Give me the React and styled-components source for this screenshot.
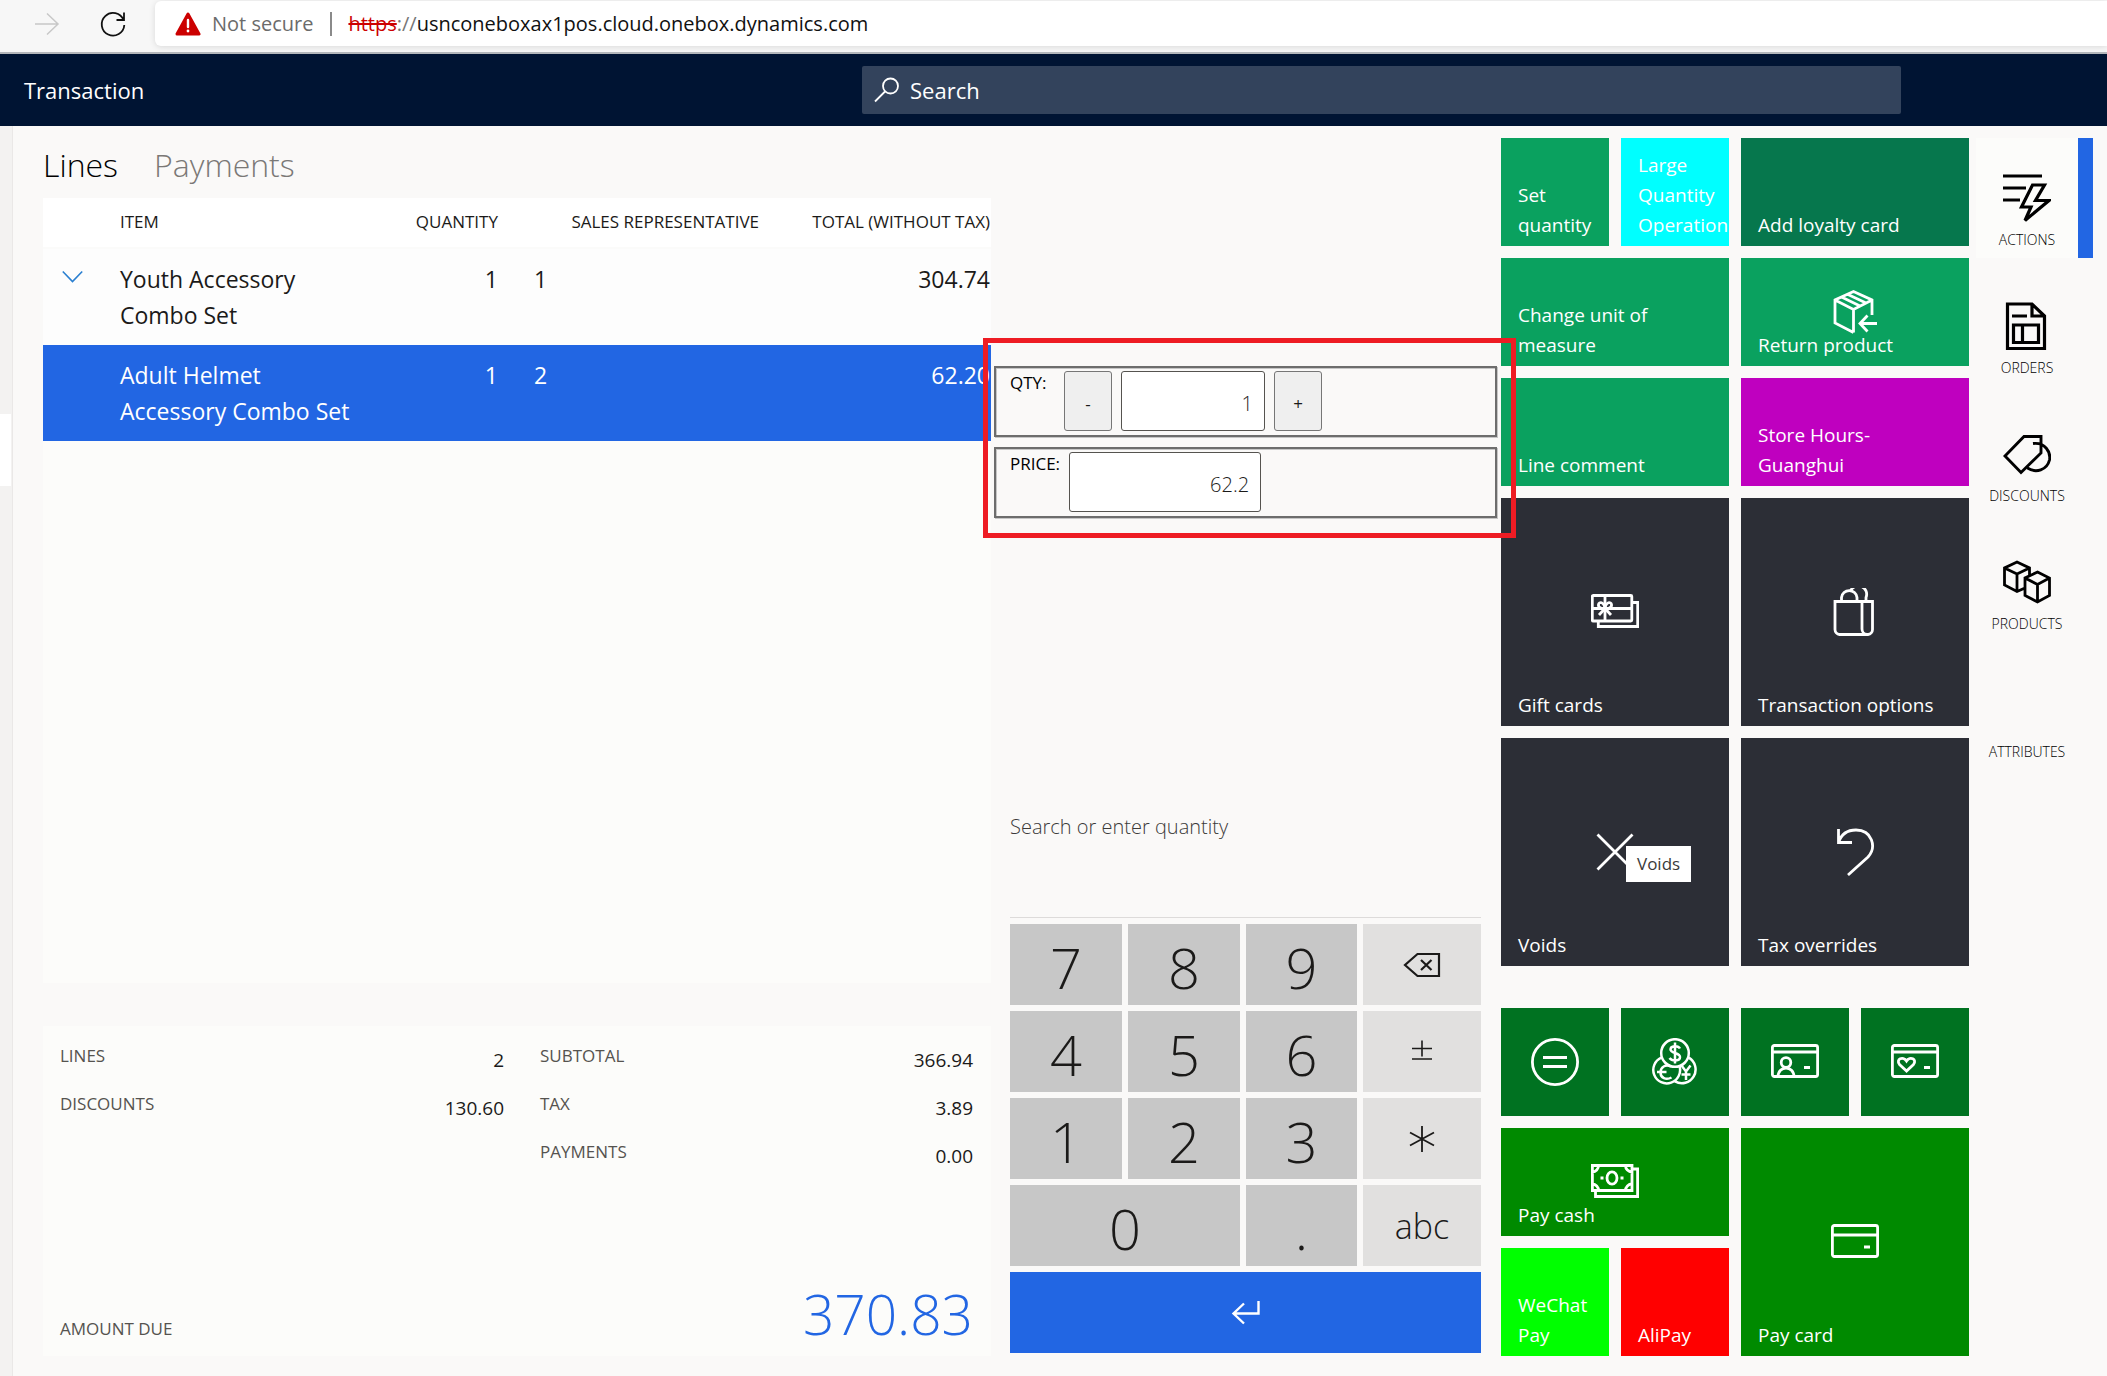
import React from "react";
import styled, { createGlobalStyle } from "styled-components";

const GlobalStyle = createGlobalStyle`
  *, *::before, *::after { box-sizing: border-box; }
  body {
    margin: 0;
    background: #faf9f8;
    color: #1b1a19;
    font-family: "Open Sans", "Noto Sans", sans-serif;
    font-size: 20px;
  }
  button, input { font: inherit; color: inherit; }
  button { cursor: pointer; }
`;

const Page = styled.div`
  display: flex;
  flex-direction: column;
  min-height: 100vh;
`;

/* Browser bar */

const BrowserBar = styled.div`
  display: flex;
  align-items: flex-start;
  height: 54px;
  padding: 1px 0 0 32px;
  background: #f7f7f7;
  border-bottom: 2px solid #b4b7bb;
`;

const BrowserButton = styled.button`
  display: flex;
  width: 30px;
  height: 45px;
  margin-right: 36px;
  padding: 0;
  align-items: center;
  border: 0;
  background: none;
  color: ${(p) => (p.$muted ? "#c8c8c8" : "#111")};
`;

const Address = styled.div`
  display: flex;
  flex: 1;
  align-items: center;
  height: 45px;
  margin-left: -9px;
  padding-left: 20px;
  border-radius: 6px 0 0 6px;
  background: #fff;
  box-shadow: 0 1px 6px rgba(0, 0, 0, 0.12);
  white-space: nowrap;
`;

const Warning = styled.span`
  margin: 0 16px 0 11px;
  padding-right: 17px;
  border-right: 2px solid #8a8a8a;
  color: #6b6b6b;
  line-height: 24px;
`;

const Url = styled.span`
  color: #111;
  s { color: #c00; }
  i { color: #767676; font-style: normal; }
`;

/* App header */

const Header = styled.header`
  display: flex;
  align-items: center;
  justify-content: space-between;
  height: 72px;
  padding: 0 206px 0 24px;
  background: #001433;
  color: #fff;
`;

const Title = styled.h1`
  margin: 0;
  font-size: 22px;
  font-weight: 400;
`;

const SearchBox = styled.label`
  display: flex;
  align-items: center;
  gap: 10px;
  width: 1039px;
  height: 48px;
  padding-left: 12px;
  border-radius: 2px;
  background: #33435c;
`;

const SearchInput = styled.input`
  flex: 1;
  padding: 0;
  border: 0;
  outline: 0;
  background: none;
  font-size: 22px;
  &::placeholder { color: #fff; opacity: 1; }
`;

/* Body */

const Body = styled.div`
  display: flex;
  flex: 1;
`;

const Rail = styled.div`
  width: 13px;
  padding-top: 288px;
  border-right: 1px solid #eae8e7;
  background: #f3f2f1;
`;

const RailMark = styled.div`
  height: 72px;
  margin-right: 1px;
  background: #fff;
`;

const Workspace = styled.main`
  display: flex;
  flex: 1;
  min-width: 0;
  padding: 12px 14px 20px 30px;
`;

const Cart = styled.section`
  display: flex;
  flex: 1;
  flex-direction: column;
  min-width: 0;
`;

const Tabs = styled.div`
  display: flex;
  gap: 36px;
  height: 60px;
`;

const Tab = styled.button`
  padding: 0 0 8px;
  border: 0;
  background: none;
  font-size: 32px;
  font-weight: 300;
  color: ${(p) => (p.$active ? "#000" : "#7a7876")};
`;

const LinesPanel = styled.div`
  flex: 1;
  margin-bottom: 43px;
  background: #fcfcfa;
`;

const LinesTable = styled.table`
  width: 100%;
  table-layout: fixed;
  border-collapse: collapse;
`;

const HeadCell = styled.th`
  width: ${(p) => p.$width || "auto"};
  height: 50px;
  padding: 0 1px 2px 0;
  border-bottom: 2px solid #fbfbfa;
  background: #fff;
  font-size: 17px;
  font-weight: 400;
  text-align: ${(p) => p.$align || "left"};
  white-space: nowrap;
`;

const LineRow = styled.tr`
  background: ${(p) => (p.$selected ? "#2266e3" : "#fdfdfd")};
  color: ${(p) => (p.$selected ? "#fff" : "#1b1a19")};
`;

const Cell = styled.td`
  padding: 12px 1px 12px ${(p) => p.$indent || "0"};
  font-size: 23px;
  line-height: 36px;
  text-align: ${(p) => p.$align || "left"};
  vertical-align: top;
`;

const Expand = styled.button`
  display: flex;
  margin-left: 19px;
  padding: 6px 0;
  border: 0;
  background: none;
  color: #2a7fd0;
`;

const Summary = styled.section`
  display: flex;
  flex-direction: column;
  justify-content: space-between;
  height: 330px;
  padding: 6px 18px 6px 17px;
  background: #fcfcfa;
`;

const Totals = styled.div`
  display: grid;
  grid-template-columns: 444px 1fr;
  column-gap: 36px;
`;

const TotalRow = styled.div`
  display: flex;
  justify-content: space-between;
  height: 48px;
  line-height: 48px;
`;

const TotalLabel = styled.span`
  font-size: 17px;
  color: #55534f;
`;

const TotalValue = styled.span`
  padding-top: 4px;
  font-size: 19px;
`;

const AmountDue = styled.div`
  display: flex;
  align-items: baseline;
  justify-content: space-between;
`;

const Amount = styled.strong`
  font-size: 55px;
  font-weight: 300;
  line-height: 72px;
  color: #2266e3;
`;

/* Entry column */

const Entry = styled.section`
  display: flex;
  flex-direction: column;
  justify-content: space-between;
  width: 510px;
  padding: 228px 4px 3px 3px;
`;

const LineEditor = styled.div`
  position: relative;
  display: grid;
  gap: 10px;
`;

const Highlight = styled.div`
  position: absolute;
  z-index: 2;
  inset: -28px -19px -20px -11px;
  border: 5px solid #ee1c24;
  pointer-events: none;
`;

const Field = styled.div`
  display: flex;
  gap: 9px;
  padding: 3px 14px 4px;
  border: 2px solid #6d6d6d;
  box-shadow: inset 1px 1px 0 #c6c6c6, 1px 1px 0 #c6c6c6;
`;

const FieldLabel = styled.label`
  min-width: 45px;
  font-size: 17px;
  line-height: 24px;
  color: #000;
`;

const FieldInput = styled.input`
  width: ${(p) => p.$width};
  height: 60px;
  padding: 4px 11px 0;
  border: 1px solid #55534f;
  border-radius: 3px;
  background: #fff;
  font-size: 20px;
  font-weight: 300;
  text-align: right;
`;

const StepButton = styled.button`
  width: 48px;
  height: 60px;
  padding: 4px 0 0;
  border: 1px solid #767676;
  border-radius: 3px;
  background: #efefef;
  font-size: 17px;
`;

const Keypad = styled.div`
  display: grid;
  grid-template-columns: 112px 112px 1fr 118px;
  gap: 6px;
  margin: 0 16px;
`;

const QuantityInput = styled.input`
  grid-column: 1 / -1;
  width: 100%;
  height: 108px;
  padding: 0 0 75px;
  border: 0;
  border-bottom: 1px solid #dddbda;
  outline: 0;
  background: none;
  font-size: 20px;
  font-weight: 300;
  &::placeholder { color: #3b3a39; opacity: 1; }
`;

const Key = styled.button`
  display: flex;
  grid-column: span ${(p) => p.$span || 1};
  align-items: center;
  justify-content: center;
  height: 81px;
  padding: 5px 0 0;
  border: 0;
  background: #c7c7c7;
  font-size: 56px;
  font-weight: 300;
  line-height: 60px;
`;

const SideKey = styled(Key)`
  padding: 0;
  background: #e1e0df;
  font-size: 34px;
`;

const EnterKey = styled(Key)`
  padding: 0;
  background: #2266e3;
  color: #fff;
`;

/* Button grids */

const Tiles = styled.div`
  display: flex;
  flex-direction: column;
  justify-content: space-between;
  width: 468px;
`;

const TileGrid = styled.div`
  display: grid;
  grid-template-columns: repeat(4, 1fr);
  grid-auto-rows: 108px;
  gap: 12px;
`;

const Tile = styled.button`
  position: relative;
  display: grid;
  grid-template-columns: 100%;
  grid-column: span ${(p) => p.$w || 1};
  grid-row: span ${(p) => p.$h || 1};
  min-width: 0;
  padding: 0;
  border: 0;
  background: ${(p) => p.$color};
  color: #fff;
  text-align: left;
`;

const TileIcon = styled.span`
  display: flex;
  grid-area: 1 / 1;
  place-self: center;
`;

const TileLabel = styled.span`
  grid-area: 1 / 1;
  align-self: end;
  padding: 0 24px 6px 17px;
  font-size: 19px;
  line-height: 30px;
`;

const Tooltip = styled.span`
  position: absolute;
  top: 108px;
  left: 125px;
  padding: 0 11px;
  background: #fff;
  color: #3b3a39;
  font-size: 17px;
  line-height: 36px;
`;

const Nav = styled.nav`
  display: flex;
  flex-direction: column;
  gap: 8px;
  width: 117px;
  margin-left: 7px;
`;

const NavItem = styled.button`
  display: flex;
  flex-direction: column;
  align-items: center;
  gap: 6px;
  height: 120px;
  padding: 36px 0 0;
  border: 0;
  border-right: 15px solid ${(p) => (p.$active ? "#2266e3" : "transparent")};
  background: ${(p) => (p.$active ? "#fcfcfa" : "none")};
  font-size: 14px;
  font-weight: 300;
  line-height: 24px;
  color: #000;
`;

const IconSlot = styled.span`
  display: flex;
  width: 48px;
  height: 48px;
`;

/* Icons */

function Icon({ children, size = 48, width = 2.8, box = 48 }) {
  return (
    <svg width={size} height={size} viewBox={`0 0 ${box} ${box}`} fill="none" stroke="currentColor" strokeWidth={width} aria-hidden="true">
      {children}
    </svg>
  );
}

const Icons = {
  forward: <Icon size={30} box={30} width={1.5}><path d="M3 15H26M15 4.5 26 15 15 25.5" /></Icon>,
  reload: <Icon size={30} box={30} width={1.8}><path d="M25.500 11A11.300 11.300 0 1 0 26.300 16M26 3.500V11H18.500" /></Icon>,
  alert: (
    <svg width="26" height="26" viewBox="0 0 26 26" aria-hidden="true">
      <path d="M13 3 24 23H2Z" fill="#c00" stroke="#c00" strokeWidth="3" strokeLinejoin="round" />
      <path d="M13 9V16" stroke="#fff" strokeWidth="2.400" strokeLinecap="round" />
      <circle cx="13" cy="20" r="1.400" fill="#fff" />
    </svg>
  ),
  search: <Icon size={26} box={26} width={1.8}><circle cx="16.500" cy="9" r="7.500" /><path d="M11 14.500 1 24.500" /></Icon>,
  chevron: <Icon size={21} box={21} width={1.6}><path d="M.8 4.500 10.500 14.500 20.200 4.500" /></Icon>,
  backspace: <Icon size={38} box={38} width={2.2}><path d="M14.500 8H36V30H14.500L2 19ZM18 14 28.500 24M28.500 14 18 24" /></Icon>,
  plusMinus: <Icon size={24} box={24} width={1.6}><path d="M2 8.500H22M12 .5V16.500M2 19H22" /></Icon>,
  asterisk: <Icon size={26} box={26} width={1.8}><path d="M13 0V26M1 6.500 25 19.500M25 6.500 1 19.500" /></Icon>,
  enter: <Icon size={30} box={30} width={2.4}><path d="M27.500 3V15.500H2.500M13 5.500 2.500 15.500 13 25.500" /></Icon>,
  box: (
    <Icon>
      <path d="M22.500 44.500 4 35V12L22.500 3.500 41 12V27M22.500 44.500V21.500M4 12 22.500 21.500 41 12M10.500 9 29 18M16.500 6.200 35 15M46 35.500H29M36.500 27.500 29 35.500 36.500 43.500" />
    </Icon>
  ),
  gift: (
    <Icon>
      <rect x="1.300" y="7.500" width="39.500" height="25.500" rx="1" />
      <path d="M41 14.500H46.700V38.500H7.300V33M14 7.500V33M1.300 20.500H41" />
      <path d="M14 20.500C10 21 7 19.500 7.500 16.500S13 13.500 14 20.500C15 13.500 20 13.500 20.500 16.500S18 21 14 20.500L8 27M14 20.500 20 27" />
    </Icon>
  ),
  bag: (
    <Icon>
      <path d="M4 13.500H41.500V41.500A5 5 0 0 1 37 46.500H8.500A5 5 0 0 1 4 41.500ZM31 13.500V41A5.500 5.500 0 0 0 36 46.500M10.500 13.500V9.500A7.800 7.800 0 0 1 26 9.500V13.500M19.500 3A7.800 7.800 0 0 1 35 9.500V13.500" />
    </Icon>
  ),
  cross: <Icon><path d="M6.500 6.500 41.500 41.500M41.500 6.500 6.500 41.500" /></Icon>,
  undo: <Icon><path d="M7.500 1V14.500H21M7.500 14.500C10 7 16 2 25 2 41 2 46 19 37 29L17 47" /></Icon>,
  equal: <Icon><circle cx="24" cy="24" r="22.600" /><path d="M12 19.500H36M12 28.500H36" /></Icon>,
  coins: (
    <Icon width={2.5}>
      <circle cx="24" cy="15" r="13.800" />
      <path d="M10.300 19.700A13.400 13.400 0 1 0 28.500 28M37.800 19.700A13.400 13.400 0 1 1 24 43.300" />
      <path d="M29 10.500C27 7 19.500 7.500 19.500 11.500S29 14.500 29 19 21 23.500 18.500 20M24 4.500V25.500M20 28.500C14.500 26 9.500 29 9.500 34.500S15 42.500 20.500 39.500M6 34H15.500M30.500 27.500 35 33.500 39.500 27.500M35 33.500V42M30.500 36.500H39.500" />
    </Icon>
  ),
  idCard: (
    <Icon>
      <rect x="1.400" y="7.500" width="45.200" height="31" rx="2" />
      <path d="M1.400 14H46.600M33 29.500H39M7 39C7 27 23 27 23 39" />
      <circle cx="15" cy="24.500" r="4.800" />
    </Icon>
  ),
  heartCard: (
    <Icon>
      <rect x="1.400" y="7.500" width="45.200" height="31" rx="2" />
      <path d="M1.400 14H46.600M33 29.500H39M15.500 33 8.500 26.500C4.500 21.500 12 17.500 15.500 23 19 17.500 26.500 21.500 22.500 26.500Z" />
    </Icon>
  ),
  cash: (
    <Icon>
      <path d="M1.400 7.500H41V32.500H1.400ZM41 11H46.600V38.500H4.500V32.500M1.400 14A6.500 6.500 0 0 0 7.500 7.500M34.500 7.500A6.500 6.500 0 0 0 41 14M1.400 26A6.500 6.500 0 0 1 7.500 32.500M34.500 32.500A6.500 6.500 0 0 1 41 26" />
      <ellipse cx="21" cy="20" rx="5" ry="6.200" />
      <path d="M9.500 20H12.500M29.500 20H32.500" />
    </Icon>
  ),
  card: <Icon><rect x="1.400" y="7.500" width="45.200" height="31" rx="2" /><path d="M1.400 17H46.600M33 29H39" /></Icon>,
  actions: (
    <Icon width={3.2}>
      <path d="M0 2H39M0 14H23M0 26H17M29.500 11H41.500L32.500 26.500H46L22 46.500 28 33H18.500Z" />
    </Icon>
  ),
  orders: (
    <Icon width={3.2}>
      <path d="M4.500 2H29L41.500 14V46.500H4.500ZM29 2V14H41.500M9 14H24M10.500 23H35.500V40.500H10.500ZM19.500 23V40.500" />
    </Icon>
  ),
  discounts: (
    <Icon width={2.9}>
      <path d="M21 6.500H38V23L18 42.500 2 26ZM30 13.500C42 12 48 22 46.500 30 44 40 33 43.500 24.500 38" />
    </Icon>
  ),
  products: (
    <Icon width={2.8}>
      <path d="M22 30 14 33.500 1.500 27V10L14 4 26.500 10V17M1.500 10 14 16 26.500 10M14 16V33.500M34.500 14 46.500 20V37.500L34.500 44 22 37.500V20ZM22 20 34.500 26.500 46.500 20M34.500 26.500V44" />
    </Icon>
  ),
};

/* Data */

const lines = [
  { item: "Youth Accessory Combo Set", qty: 1, rep: 1, total: "304.74" },
  { item: "Adult Helmet Accessory Combo Set", qty: 1, rep: 2, total: "62.20", selected: true },
];

const actionTiles = [
  { label: "Set quantity", color: "#0aa15f" },
  { label: "Large Quantity Operation", color: "#00ffff" },
  { label: "Add loyalty card", color: "#06774d", w: 2 },
  { label: "Change unit of measure", color: "#0aa15f", w: 2 },
  { label: "Return product", color: "#0aa15f", w: 2, icon: "box" },
  { label: "Line comment", color: "#0aa15f", w: 2 },
  { label: "Store Hours-Guanghui", color: "#bf00bf", w: 2 },
  { label: "Gift cards", color: "#2c2e36", w: 2, h: 2, icon: "gift" },
  { label: "Transaction options", color: "#2c2e36", w: 2, h: 2, icon: "bag" },
  { label: "Voids", color: "#2c2e36", w: 2, h: 2, icon: "cross", tip: "Voids" },
  { label: "Tax overrides", color: "#2c2e36", w: 2, h: 2, icon: "undo" },
];

const payTiles = [
  { name: "Pay exact", color: "#007221", icon: "equal" },
  { name: "Pay currency", color: "#007221", icon: "coins" },
  { name: "Customer account", color: "#007221", icon: "idCard" },
  { name: "Loyalty card", color: "#007221", icon: "heartCard" },
  { label: "Pay cash", color: "#008a00", w: 2, icon: "cash" },
  { label: "Pay card", color: "#008a00", w: 2, h: 2, icon: "card" },
  { label: "WeChat Pay", color: "#00ff00" },
  { label: "AliPay", color: "#ff0000" },
];

const navItems = [
  { label: "ACTIONS", icon: "actions", active: true },
  { label: "ORDERS", icon: "orders" },
  { label: "DISCOUNTS", icon: "discounts" },
  { label: "PRODUCTS", icon: "products" },
  { label: "ATTRIBUTES" },
];

function TileButton({ tile }) {
  return (
    <Tile type="button" $w={tile.w} $h={tile.h} $color={tile.color} aria-label={tile.name}>
      {tile.icon && <TileIcon>{Icons[tile.icon]}</TileIcon>}
      {tile.label && <TileLabel>{tile.label}</TileLabel>}
      {tile.tip && <Tooltip role="tooltip">{tile.tip}</Tooltip>}
    </Tile>
  );
}

function Total({ label, value }) {
  return (
    <TotalRow>
      <TotalLabel>{label}</TotalLabel>
      <TotalValue>{value}</TotalValue>
    </TotalRow>
  );
}

export default function App() {
  return (
    <Page>
      <GlobalStyle />
      <BrowserBar>
        <BrowserButton type="button" $muted aria-label="Forward">{Icons.forward}</BrowserButton>
        <BrowserButton type="button" aria-label="Reload">{Icons.reload}</BrowserButton>
        <Address>
          {Icons.alert}
          <Warning>Not secure</Warning>
          <Url><s>https</s><i>://</i>usnconeboxax1pos.cloud.onebox.dynamics.com</Url>
        </Address>
      </BrowserBar>

      <Header>
        <Title>Transaction</Title>
        <SearchBox>
          {Icons.search}
          <SearchInput type="text" placeholder="Search" aria-label="Search" />
        </SearchBox>
      </Header>

      <Body>
        <Rail><RailMark /></Rail>
        <Workspace>
          <Cart>
            <Tabs>
              <Tab type="button" $active>Lines</Tab>
              <Tab type="button">Payments</Tab>
            </Tabs>
            <LinesPanel>
              <LinesTable>
                <thead>
                  <tr>
                    <HeadCell $width="77px" />
                    <HeadCell $width="240px">ITEM</HeadCell>
                    <HeadCell $width="139px" $align="right">QUANTITY</HeadCell>
                    <HeadCell $width="261px" $align="right">SALES REPRESENTATIVE</HeadCell>
                    <HeadCell $align="right">TOTAL (WITHOUT TAX)</HeadCell>
                  </tr>
                </thead>
                <tbody>
                  {lines.map((line) => (
                    <LineRow key={line.item} $selected={line.selected}>
                      <Cell>
                        {!line.selected && (
                          <Expand type="button" aria-label="Expand">{Icons.chevron}</Expand>
                        )}
                      </Cell>
                      <Cell>{line.item}</Cell>
                      <Cell $align="right">{line.qty}</Cell>
                      <Cell $indent="35px">{line.rep}</Cell>
                      <Cell $align="right">{line.total}</Cell>
                    </LineRow>
                  ))}
                </tbody>
              </LinesTable>
            </LinesPanel>
            <Summary>
              <Totals>
                <div>
                  <Total label="LINES" value="2" />
                  <Total label="DISCOUNTS" value="130.60" />
                </div>
                <div>
                  <Total label="SUBTOTAL" value="366.94" />
                  <Total label="TAX" value="3.89" />
                  <Total label="PAYMENTS" value="0.00" />
                </div>
              </Totals>
              <AmountDue>
                <TotalLabel>AMOUNT DUE</TotalLabel>
                <Amount>370.83</Amount>
              </AmountDue>
            </Summary>
          </Cart>

          <Entry>
            <LineEditor>
              <Field>
                <FieldLabel htmlFor="qty">QTY:</FieldLabel>
                <StepButton type="button">-</StepButton>
                <FieldInput id="qty" $width="144px" defaultValue="1" />
                <StepButton type="button">+</StepButton>
              </Field>
              <Field>
                <FieldLabel htmlFor="price">PRICE:</FieldLabel>
                <FieldInput id="price" $width="192px" defaultValue="62.2" />
              </Field>
              <Highlight />
            </LineEditor>
            <Keypad>
              <QuantityInput type="text" placeholder="Search or enter quantity" aria-label="Search or enter quantity" />
              <Key type="button">7</Key>
              <Key type="button">8</Key>
              <Key type="button">9</Key>
              <SideKey type="button" aria-label="Backspace">{Icons.backspace}</SideKey>
              <Key type="button">4</Key>
              <Key type="button">5</Key>
              <Key type="button">6</Key>
              <SideKey type="button" aria-label="Plus or minus">{Icons.plusMinus}</SideKey>
              <Key type="button">1</Key>
              <Key type="button">2</Key>
              <Key type="button">3</Key>
              <SideKey type="button" aria-label="Multiply">{Icons.asterisk}</SideKey>
              <Key type="button" $span={2}>0</Key>
              <Key type="button">.</Key>
              <SideKey type="button">abc</SideKey>
              <EnterKey type="button" $span={4} aria-label="Enter">{Icons.enter}</EnterKey>
            </Keypad>
          </Entry>

          <Tiles>
            <TileGrid>{actionTiles.map((t) => <TileButton key={t.label} tile={t} />)}</TileGrid>
            <TileGrid>{payTiles.map((t) => <TileButton key={t.label || t.name} tile={t} />)}</TileGrid>
          </Tiles>

          <Nav>
            {navItems.map((n) => (
              <NavItem key={n.label} type="button" $active={n.active}>
                <IconSlot>{n.icon && Icons[n.icon]}</IconSlot>
                {n.label}
              </NavItem>
            ))}
          </Nav>
        </Workspace>
      </Body>
    </Page>
  );
}
